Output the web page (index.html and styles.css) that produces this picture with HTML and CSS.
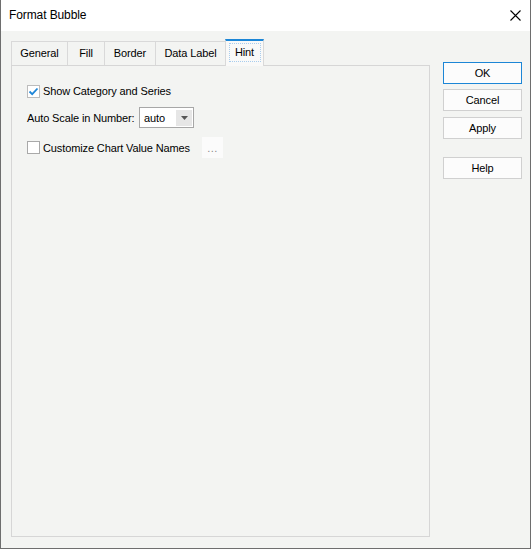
FILE: index.html
```html
<!DOCTYPE html>
<html>
<head>
<meta charset="utf-8">
<link rel="stylesheet" href="styles.css">
</head>
<body>
<div class="window">
  <div class="titlebar">
    <span class="title">Format Bubble</span>
    <svg class="close" width="11" height="11" viewBox="0 0 11 11"><path d="M0.5 0.5 L10.5 10.5 M10.5 0.5 L0.5 10.5" stroke="#000" stroke-width="1.1" fill="none"/></svg>
  </div>
  <div class="main">
    <div class="left">
      <div class="tabs">
        <div class="tab t-general">General</div>
        <div class="tab t-fill">Fill</div>
        <div class="tab t-border">Border</div>
        <div class="tab t-data">Data Label</div>
        <div class="tab t-hint active"><span class="focus">Hint</span></div>
      </div>
      <div class="panel">
        <div class="row row1">
          <span class="cb checked">
            <svg width="11" height="11" viewBox="0 0 11 11"><path d="M1.5 5.5 L4.2 8.2 L9.5 2.5" stroke="#1e86d8" stroke-width="1.8" fill="none"/></svg>
          </span>
          <span class="cb-label">Show Category and Series</span>
        </div>
        <div class="row row2">
          <span class="field-label">Auto Scale in Number:</span>
          <div class="select">
            <span class="select-value">auto</span>
            <span class="select-arrow"><svg width="7" height="4" viewBox="0 0 7 4"><path d="M0 0 L7 0 L3.5 4 Z" fill="#555"/></svg></span>
          </div>
        </div>
        <div class="row row3">
          <span class="cb"></span>
          <span class="cb-label wide">Customize Chart Value Names</span>
          <span class="dots">...</span>
        </div>
      </div>
    </div>
    <div class="buttons">
      <div class="btn default">OK</div>
      <div class="btn b-cancel">Cancel</div>
      <div class="btn b-apply">Apply</div>
      <div class="btn b-help">Help</div>
    </div>
  </div>
</div>
</body>
</html>
```
FILE: styles.css
```css
html, body {
  margin: 0;
  padding: 0;
  background: #f3f4f2;
}
.window {
  width: 531px;
  height: 549px;
  box-sizing: border-box;
  border: 1px solid #6e6e6e;
  border-top: none;
  background: #f3f4f2;
  font-family: "Liberation Sans", Arial, sans-serif;
  font-size: 11px;
  letter-spacing: -0.12px;
  color: #000;
  overflow: hidden;
  white-space: nowrap;
}
.titlebar {
  height: 31px;
  background: #ffffff;
  display: flex;
  align-items: center;
  justify-content: space-between;
  padding-left: 8px;
  padding-right: 9px;
}
.title {
  font-size: 12px;
  letter-spacing: -0.1px;
  padding-bottom: 1px;
}
.close {
  display: block;
}
.main {
  display: flex;
  padding-top: 8px;
  padding-left: 10px;
}
.left {
  width: 419px;
  display: flex;
  flex-direction: column;
}
.tabs {
  display: flex;
  align-items: flex-end;
  height: 26px;
  position: relative;
  z-index: 1;
}
.tab {
  height: 24px;
  box-sizing: border-box;
  border-top: 1px solid #d9d9d9;
  border-left: 1px solid #d9d9d9;
  display: flex;
  align-items: center;
  justify-content: center;
  padding-bottom: 1px;
}
.t-general { width: 56px; }
.t-fill { width: 37px; }
.t-border { width: 51px; }
.t-data { width: 70px; }
.tab.active {
  width: 39px;
  height: 27px;
  margin-bottom: -1px;
  border-top: 2px solid #1c86d6;
  border-right: 1px solid #d9d9d9;
  background: #f9f9f8;
  padding-bottom: 3px;
}
.focus {
  width: 32px;
  height: 19px;
  box-sizing: border-box;
  border: 1px dotted #a8cdee;
  display: flex;
  align-items: center;
  justify-content: center;
}
.panel {
  height: 472px;
  box-sizing: border-box;
  border: 1px solid #d6d6d6;
  padding: 15px 0 0 15px;
  display: flex;
  flex-direction: column;
}
.row {
  display: flex;
  align-items: center;
}
.row1 { height: 20px; }
.row2 { height: 21px; margin-top: 6px; }
.row3 { height: 21px; margin-top: 9px; }
.cb {
  width: 13px;
  height: 13px;
  box-sizing: border-box;
  border: 1px solid #a9a9a9;
  background: #ffffff;
  display: flex;
  align-items: center;
  justify-content: center;
  margin-right: 3px;
}
.cb.checked {
  border-color: #bcbcbc;
}
.cb svg { display: block; }
.cb-label.wide {
  width: 159px;
}
.field-label {
  width: 112px;
}
.select {
  width: 55px;
  height: 21px;
  box-sizing: border-box;
  border: 1px solid #a7a7a7;
  background: #ffffff;
  display: flex;
  align-items: center;
  justify-content: space-between;
  padding-left: 4px;
  padding-right: 1px;
}
.select-arrow {
  width: 16px;
  height: 16px;
  background: #e6e6e6;
  display: flex;
  align-items: center;
  justify-content: center;
}
.select-arrow svg { display: block; }
.dots {
  width: 21px;
  height: 21px;
  background: #fbfbfb;
  color: #8a8a8a;
  display: flex;
  align-items: center;
  justify-content: center;
  letter-spacing: 0.5px;
}
.buttons {
  width: 79px;
  margin-left: 13px;
  padding-top: 23px;
  display: flex;
  flex-direction: column;
}
.btn {
  height: 22px;
  box-sizing: border-box;
  border: 1px solid #d0d0d0;
  background: #fcfcfc;
  display: flex;
  align-items: center;
  justify-content: center;
  padding-bottom: 1px;
}
.btn.default {
  border-color: #1c86d6;
}
.b-cancel { margin-top: 5px; }
.b-apply { margin-top: 6px; }
.b-help { margin-top: 18px; }
```
